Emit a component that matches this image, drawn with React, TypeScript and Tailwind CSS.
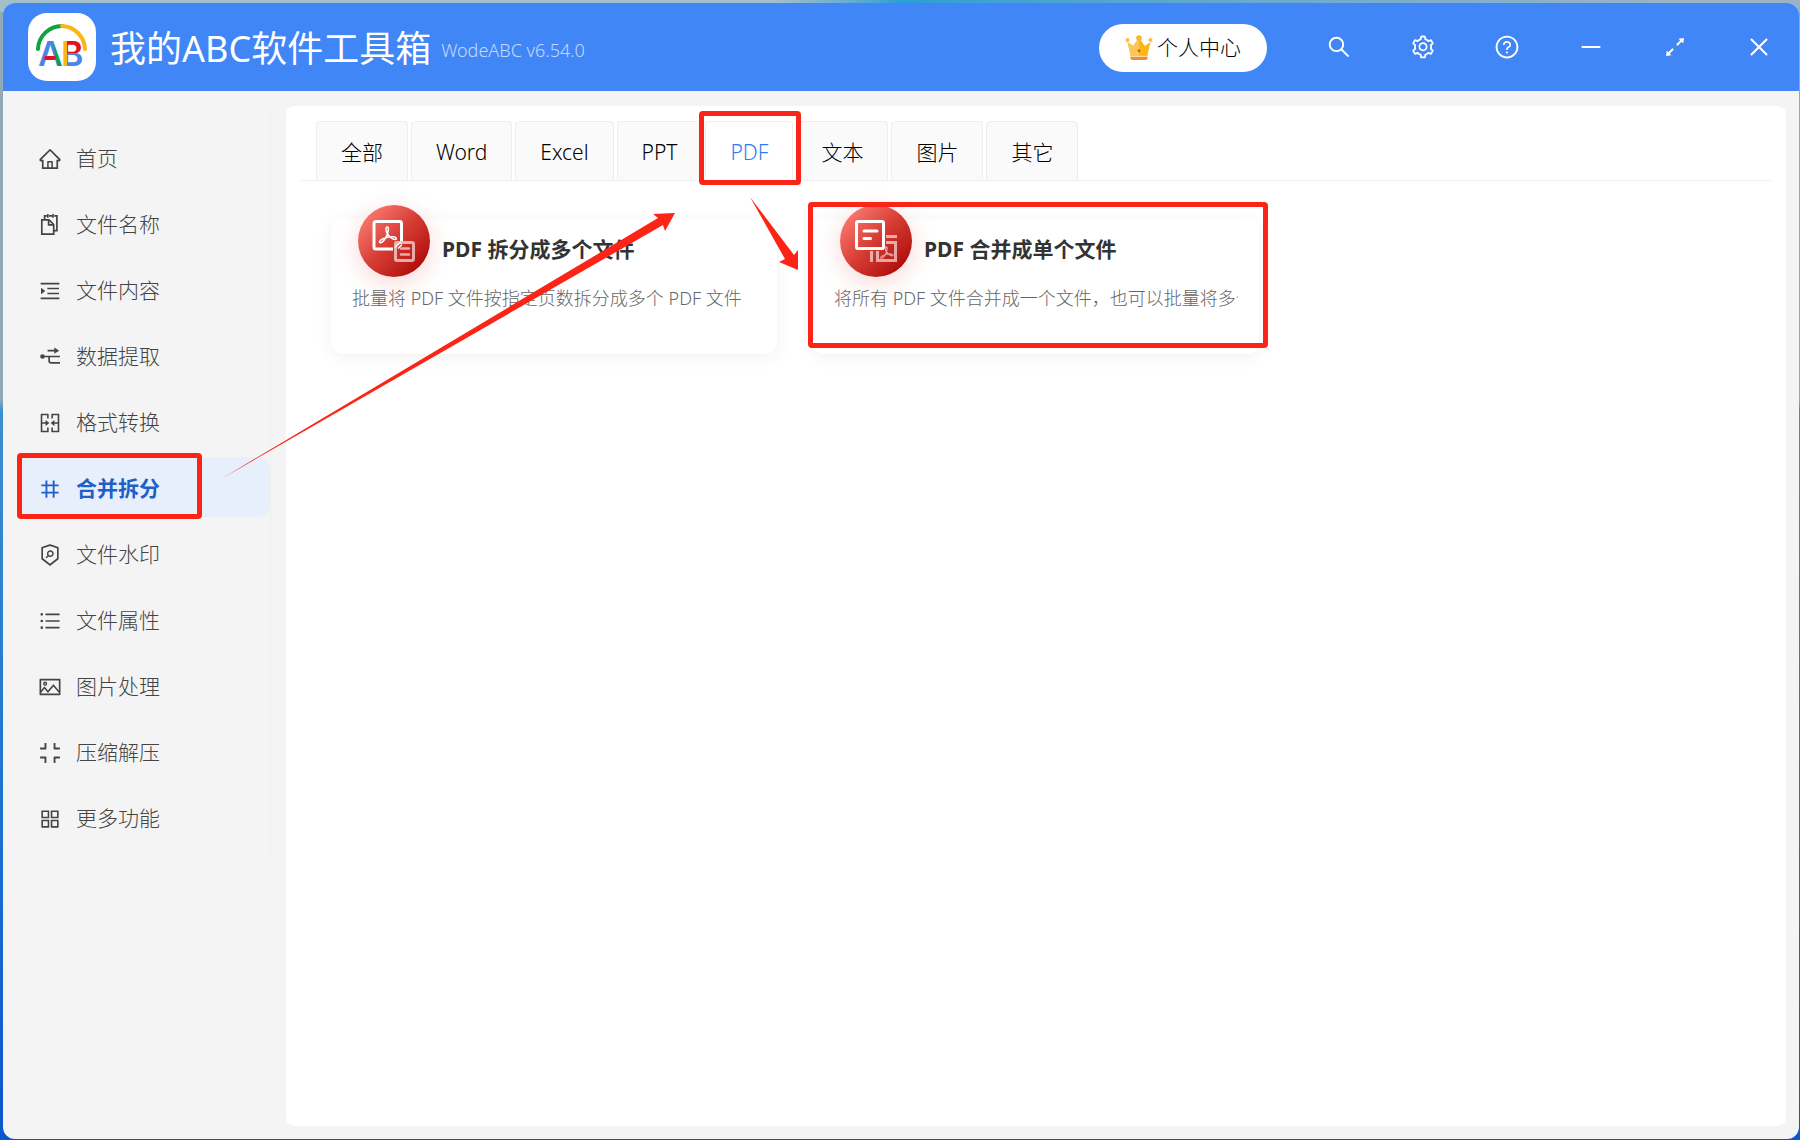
import { useState, type ReactNode } from 'react'
import {
  AiOutlineAppstore,
  AiOutlineArrowsAlt,
  AiOutlineClose,
  AiOutlineCompress,
  AiOutlineHome,
  AiOutlineMenuUnfold,
  AiOutlineMergeCells,
  AiOutlineMinus,
  AiOutlineNumber,
  AiOutlinePicture,
  AiOutlineQuestionCircle,
  AiOutlineSearch,
  AiOutlineSecurityScan,
  AiOutlineSetting,
  AiOutlineUnorderedList
} from 'react-icons/ai'

function Logo() {
  return (
    <svg viewBox="0 0 68 68" className="h-[68px] w-[68px] shrink-0" role="img" aria-label="WodeABC">
      <defs>
        <pattern id="fillA" patternUnits="userSpaceOnUse" width="68" height="68">
          <rect width="68" height="68" fill="#4a86e8" />
          <path d="M20 0h48v68H32z" fill="#0fa33f" />
        </pattern>
        <pattern id="fillB" patternUnits="userSpaceOnUse" width="68" height="68">
          <rect width="68" height="40" fill="#e3131b" />
          <rect y="40" width="68" height="28" fill="#4a86e8" />
          <rect width="39" height="68" fill="#fbb615" />
        </pattern>
      </defs>
      <rect width="68" height="68" rx="19" fill="#fff" />
      <path d="M10 36A24 24 0 0 1 34 13" fill="none" stroke="#0fa33f" strokeWidth="4" strokeLinecap="round" />
      <path d="M34 13A24 24 0 0 1 57 36" fill="none" stroke="#fbb615" strokeWidth="4" strokeLinecap="round" />
      <text x="10" y="53" fontSize="34" fontWeight="600" fontFamily="Inter, sans-serif" fill="url(#fillA)">A</text>
      <text x="33" y="53" fontSize="34" fontWeight="600" fontFamily="Inter, sans-serif" fill="url(#fillB)">B</text>
      <path d="M18 45h8" stroke="#e3131b" strokeWidth="4" strokeLinecap="round" />
    </svg>
  )
}

function CrownIcon() {
  return (
    <svg viewBox="0 0 28 26" className="h-[26px] w-7" aria-hidden="true">
      <path d="M2.500 7l3.500 15h16l3.500-15-5.800 4L14 2.500 8.300 11z" fill="#ffb60f" />
      <path d="M2.500 7l3.500 15h8V2.500L8.300 11z" fill="#fdc65a" />
      <path d="M5 20.500h18l-.6 3.300c-.1.700-.6 1.200-1.400 1.200H7c-.8 0-1.300-.5-1.400-1.200z" fill="#f08a3c" />
      <path d="M5 20.500h18l-.2 1.500H5.200z" fill="#ffd9a0" />
      <circle cx="2.500" cy="5" r="2" fill="#fdbd3e" />
      <circle cx="14" cy="3" r="2.800" fill="#fdb52a" />
      <circle cx="25.500" cy="5" r="2" fill="#fdbd3e" />
      <path d="M14 14l1.600 1.800L14 17.600l-1.600-1.800z" fill="#d9480f" />
    </svg>
  )
}

function FileNameIcon() {
  return (
    <svg viewBox="-1 -1 24 24" className="h-6 w-6" fill="none" stroke="currentColor" strokeWidth="1.700" aria-hidden="true">
      <path d="M2.800 5.900h7.200l4.700 4.600v9.600H2.800z" />
      <path d="M9.600 6v4.900h5" />
      <path d="M5.600 5.500V1.900h2.200M10 1.900h3M15.200 1.900h2.700v14.700h-3M8.800 0v3.800M14 0v3.800" />
    </svg>
  )
}

function ExtractIcon() {
  return (
    <svg viewBox="-1 -1 24 24" className="h-6 w-6" fill="none" stroke="currentColor" strokeWidth="1.700" aria-hidden="true">
      <circle cx="3.500" cy="10.500" r="2.300" fill="currentColor" stroke="none" />
      <path d="M5 10.500h16M10.100 10.500v4.200c0 1.400.8 2.200 2.200 2.200H21M8.600 4.700h8" />
      <path d="M15.300 1.600l4.900 3.100-4.900 3.100z" fill="currentColor" stroke="none" />
    </svg>
  )
}

// Acrobat style swirl, drawn around 0,0
function Swirl() {
  return (
    <path
      d="M-.4-8.500c1.900-.2 1.500 3.500.3 7-1.500 4.200-4.700 8.800-7 8.700-1.900-.2-.6-2.600 2.600-3.900C-1.500 1.900 2.400 1 5.700 1.200c3.500.2 4.200 2.600 2 2.800C5 4.100 1 .4-.6-2.600-1.900-5.200-1.900-8.300-.4-8.500z"
      fill="none"
      stroke="#fff"
      strokeWidth="1.500"
    />
  )
}

function SplitIcon() {
  return (
    <svg viewBox="0 0 72 72" className="h-[72px] w-[72px]" fill="none" aria-hidden="true">
      <g opacity=".62">
        <rect x="37.500" y="37.500" width="18" height="18" rx="1.500" stroke="#fff" strokeWidth="3" />
        <path d="M43 43.500h8M43 49.500h8" stroke="#fff" strokeWidth="2.500" strokeLinecap="round" />
      </g>
      <path d="M43.500 36V18.500a2 2 0 0 0-2-2H18a2 2 0 0 0-2 2V42a2 2 0 0 0 2 2h17" stroke="#fff" strokeWidth="3" />
      <path d="M37 42.500l6-5.500M40 43.500l4-4" stroke="#fff" strokeWidth="1.500" />
      <g transform="translate(29.500 30.500)">
        <Swirl />
      </g>
    </svg>
  )
}

function MergeIcon() {
  return (
    <svg viewBox="0 0 72 72" className="h-[72px] w-[72px]" fill="none" aria-hidden="true">
      <g opacity=".6" stroke="#fff" strokeWidth="3">
        <path d="M31.500 46v11M46 31.500h11M46 37.500h9.500v18h-18V46" />
        <g transform="translate(46.500 48) scale(.72)">
          <Swirl />
        </g>
      </g>
      <rect x="16.500" y="16.500" width="27" height="27" rx="1.500" stroke="#fff" strokeWidth="3" />
      <path d="M24 26h13M24 33.500h6.500" stroke="#fff" strokeWidth="3" strokeLinecap="round" />
    </svg>
  )
}

const menuItems: { label: string; icon: ReactNode }[] = [
  { label: '首页', icon: <AiOutlineHome /> },
  { label: '文件名称', icon: <FileNameIcon /> },
  { label: '文件内容', icon: <AiOutlineMenuUnfold /> },
  { label: '数据提取', icon: <ExtractIcon /> },
  { label: '格式转换', icon: <AiOutlineMergeCells /> },
  { label: '合并拆分', icon: <AiOutlineNumber /> },
  { label: '文件水印', icon: <AiOutlineSecurityScan /> },
  { label: '文件属性', icon: <AiOutlineUnorderedList /> },
  { label: '图片处理', icon: <AiOutlinePicture /> },
  { label: '压缩解压', icon: <AiOutlineCompress /> },
  { label: '更多功能', icon: <AiOutlineAppstore /> }
]

const tabs = ['全部', 'Word', 'Excel', 'PPT', 'PDF', '文本', '图片', '其它']

const tools = [
  {
    title: 'PDF 拆分成多个文件',
    description: '批量将 PDF 文件按指定页数拆分成多个 PDF 文件',
    icon: <SplitIcon />,
    marked: false
  },
  {
    title: 'PDF 合并成单个文件',
    description: '将所有 PDF 文件合并成一个文件，也可以批量将多个 PDF 文件合并',
    icon: <MergeIcon />,
    marked: true
  }
]

const windowButtons = [
  { label: '搜索', icon: <AiOutlineSearch /> },
  { label: '设置', icon: <AiOutlineSetting /> },
  { label: '帮助', icon: <AiOutlineQuestionCircle /> },
  { label: '最小化', icon: <AiOutlineMinus /> },
  { label: '最大化', icon: <AiOutlineArrowsAlt /> },
  { label: '关闭', icon: <AiOutlineClose /> }
]

function Header() {
  return (
    <header className="flex h-[88px] items-center bg-[#4086f7] pr-4 pl-[25px] text-white">
      <Logo />
      <h1 className="ml-[14px] pt-[3px] text-[36px] leading-[48px] font-normal whitespace-nowrap">我的ABC软件工具箱</h1>
      <span className="ml-[10px] pt-[6px] text-[18px] leading-6 font-light whitespace-nowrap text-[#c4dafd]">WodeABC v6.54.0</span>
      <button className="mt-[2px] mr-12 ml-auto flex h-12 w-[168px] items-center justify-center gap-1 rounded-full bg-white text-[21px] font-light text-black">
        <CrownIcon />
        个人中心
      </button>
      <div className="flex gap-9">
        {windowButtons.map((button) => (
          <button key={button.label} aria-label={button.label} className="flex h-12 w-12 items-center justify-center text-[26px]">
            {button.icon}
          </button>
        ))}
      </div>
    </header>
  )
}

function Sidebar() {
  const [active, setActive] = useState('合并拆分')

  return (
    <nav className="w-[283px] shrink-0 pt-5 pr-[15px] pl-[15px]">
      <ul className="flex flex-col gap-[6px] border-r border-[#eeeeee] pt-4 pb-2">
        {menuItems.map((item) => (
          <li key={item.label} className="relative">
            <button
              onClick={() => setActive(item.label)}
              className={`flex h-[60px] w-full items-center gap-[14px] rounded-xl pt-[3px] pl-5 text-[21px] ${
                active === item.label ? 'bg-[#e7effd] font-bold text-[#1f5fc8]' : 'font-light text-[#444]'
              }`}
            >
              <span className="text-[24px]">{item.icon}</span>
              {item.label}
            </button>
            {item.label === '合并拆分' && (
              <div className="pointer-events-none absolute -top-1 -left-px h-[66px] w-[185px] rounded border-[5px] border-[#fb2417]" />
            )}
          </li>
        ))}
      </ul>
    </nav>
  )
}

function Tabs() {
  const [active, setActive] = useState('PDF')

  return (
    <div role="tablist" className="flex gap-[3px] border-b border-[#eeeeee] pl-[15px]">
      {tabs.map((tab) => (
        <div key={tab} className="relative -mb-px">
          <button
            role="tab"
            aria-selected={active === tab}
            onClick={() => setActive(tab)}
            className={`h-[60px] rounded-t border border-[#eeeeee] px-6 pt-[3px] text-[21px] font-light ${
              active === tab ? 'border-b-white bg-white text-[#2f7af5]' : 'bg-[#fafafa] text-black'
            }`}
          >
            {tab}
          </button>
          {tab === 'PDF' && (
            <div className="pointer-events-none absolute -right-2 -left-[6px] -top-[10px] z-10 h-[74px] rounded border-[5px] border-[#fb2417]" />
          )}
        </div>
      ))}
    </div>
  )
}

function ToolCard({ tool }: { tool: (typeof tools)[number] }) {
  return (
    <article className="relative h-[135px] rounded-xl bg-white px-[21px] shadow-[0_3px_18px_rgba(0,0,0,0.06)]">
      <div className="flex items-start gap-3 pl-[6px]">
        <div className="-mt-[14px] h-[72px] w-[72px] shrink-0 rounded-full bg-linear-to-br from-[#fb7a71] from-10% via-[#d53a33] via-50% to-[#ad0000] to-90% shadow-[0_6px_24px_rgba(220,60,50,0.2)]">
          {tool.icon}
        </div>
        <h2 className="pt-[15px] text-[21px] leading-[30px] font-bold whitespace-nowrap text-[#333]">{tool.title}</h2>
      </div>
      <p className="mt-2 overflow-hidden text-[18px] leading-[27px] font-light whitespace-nowrap text-[#666]">{tool.description}</p>
      {tool.marked && (
        <div className="pointer-events-none absolute -top-[17px] -right-[9px] -left-[5px] h-[146px] rounded border-[5px] border-[#fb2417]" />
      )}
    </article>
  )
}

// Hand-drawn guide arrows that lie over the whole window
function GuideArrows() {
  return (
    <svg className="pointer-events-none absolute top-0 left-0 z-20" width="820" height="500" fill="#fb2417" aria-hidden="true">
      <path d="M221 479L658 218 653 214 675 213 665 231 663 225z" />
      <path d="M750 197L794 255 798 250 798 270 779 262 785 259z" />
    </svg>
  )
}

export default function App() {
  return (
    <div className="relative flex min-h-screen flex-col bg-linear-to-b from-[#8fa9b8] from-35% via-[#3a8fd0] via-36% to-[#0c55cf] pt-[3px] pr-px pb-px pl-[3px] font-['Noto_Sans','Noto_Sans_CJK_SC',sans-serif]">
      <div className="absolute inset-x-0 top-0 h-3 bg-linear-to-r from-[#a3bfc9] from-43% via-[#2a9fd6] via-50% to-[#9ab4c6] to-93%" />
      <div className="relative flex flex-1 flex-col overflow-hidden rounded-xl bg-[#f4f4f4]">
        <Header />
        <div className="flex flex-1">
          <Sidebar />
          <main className="mt-[15px] mr-[13px] mb-[13px] min-w-0 flex-1 rounded-lg bg-white px-[15px] pt-[15px]">
            <Tabs />
            <section className="grid grid-cols-3 gap-9 px-[30px] pt-[38px]">
              {tools.map((tool) => (
                <ToolCard key={tool.title} tool={tool} />
              ))}
            </section>
          </main>
        </div>
      </div>
      <GuideArrows />
    </div>
  )
}
